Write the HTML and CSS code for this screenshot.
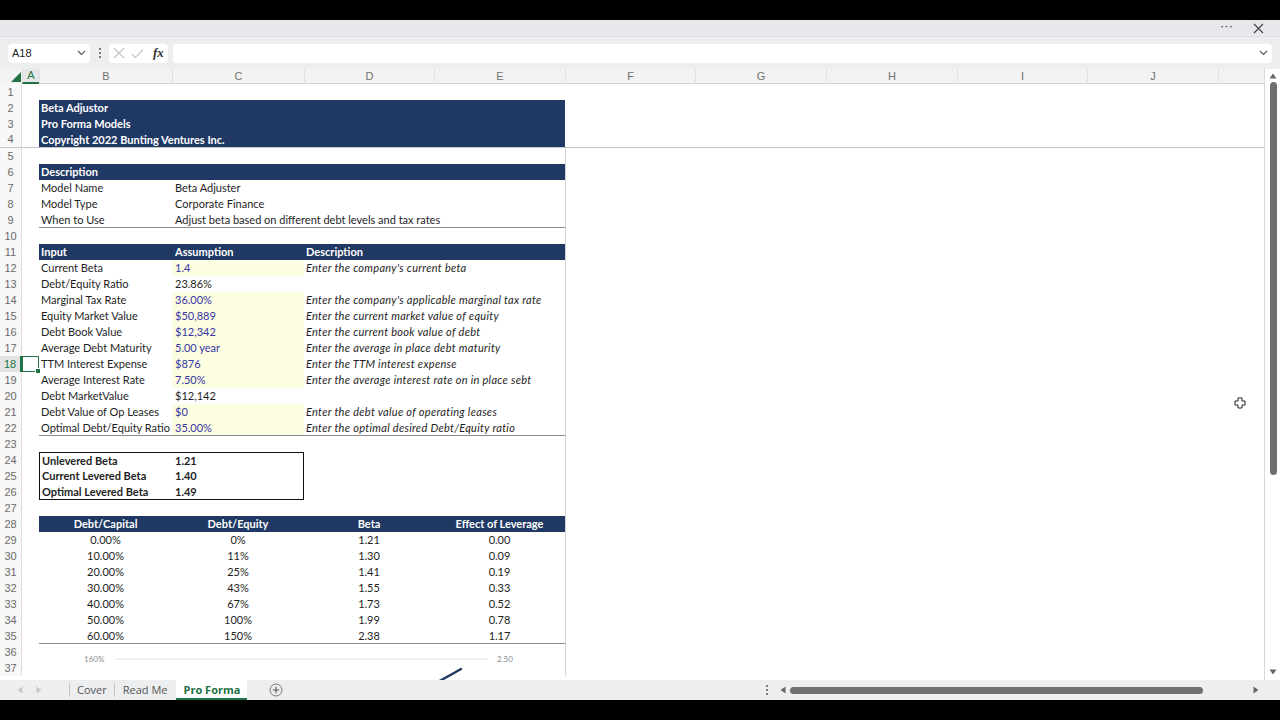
FILE: index.html
```html
<!DOCTYPE html>
<html>
<head>
<meta charset="utf-8">
<title>Beta Adjustor</title>
<link rel="stylesheet" href="styles.css">
</head>
<body>
<div class="app">
  <div class="blackbar"></div>
  <div class="titlebar">
    <span class="more">···</span>
    <svg class="close" width="11" height="11" viewBox="0 0 11 11"><path d="M1 1L10 10M10 1L1 10" stroke="#444" stroke-width="1.2" fill="none"/></svg>
  </div>
  <div class="fbar">
    <div class="namebox"><span>A18</span><svg width="9" height="6" viewBox="0 0 9 6"><path d="M1 1L4.5 4.5L8 1" stroke="#555" stroke-width="1.1" fill="none"/></svg></div>
    <div class="vdots"><i></i><i></i><i></i></div>
    <div class="fbtns">
      <svg width="12" height="12" viewBox="0 0 12 12"><path d="M1 1L11 11M11 1L1 11" stroke="#c4c4c4" stroke-width="1.1" fill="none"/></svg>
      <svg width="13" height="11" viewBox="0 0 13 11"><path d="M1 6L4.5 9.5L12 1.5" stroke="#c4c4c4" stroke-width="1.1" fill="none"/></svg>
      <span class="fx">fx</span>
    </div>
    <div class="finput"><svg width="9" height="6" viewBox="0 0 9 6"><path d="M1 1L4.5 4.5L8 1" stroke="#555" stroke-width="1.1" fill="none"/></svg></div>
  </div>
  <div class="main">
    <div class="sheet">
      <div class="colhead">
        <div class="corner"><svg width="10" height="10" viewBox="0 0 10 10"><path d="M10 0L10 10L0 10Z" fill="#217346"/></svg></div>
        <div class="ch selc">A</div>
        <div class="ch">B</div>
        <div class="ch">C</div>
        <div class="ch">D</div>
        <div class="ch">E</div>
        <div class="ch">F</div>
        <div class="ch">G</div>
        <div class="ch">H</div>
        <div class="ch">I</div>
        <div class="ch">J</div>
        <div class="ch last"></div>
      </div>
      <div class="rows">
        <div class="r"><div class="h">1</div></div>
        <div class="r"><div class="h">2</div><div class="bE nv">Beta Adjustor</div></div>
        <div class="r"><div class="h">3</div><div class="bE nv">Pro Forma Models</div></div>
        <div class="r frz"><div class="h">4</div><div class="bE nv">Copyright 2022 Bunting Ventures Inc.</div></div>
        <div class="r"><div class="h">5</div></div>
        <div class="r"><div class="h">6</div><div class="bE nv">Description</div></div>
        <div class="r"><div class="h">7</div><div class="b">Model Name</div><div class="cE">Beta Adjuster</div></div>
        <div class="r"><div class="h">8</div><div class="b">Model Type</div><div class="cE">Corporate Finance</div></div>
        <div class="r"><div class="h">9</div><div class="b ul">When to Use</div><div class="cE ul">Adjust beta based on different debt levels and tax rates</div></div>
        <div class="r"><div class="h">10</div></div>
        <div class="r"><div class="h">11</div><div class="b nv">Input</div><div class="c nv">Assumption</div><div class="dE nv">Description</div></div>
        <div class="r"><div class="h">12</div><div class="b">Current Beta</div><div class="c yl">1.4</div><div class="dE it">Enter the company's current beta</div></div>
        <div class="r"><div class="h">13</div><div class="b">Debt/Equity Ratio</div><div class="c">23.86%</div></div>
        <div class="r"><div class="h">14</div><div class="b">Marginal Tax Rate</div><div class="c yl">36.00%</div><div class="dE it">Enter the company's applicable marginal tax rate</div></div>
        <div class="r"><div class="h">15</div><div class="b">Equity Market Value</div><div class="c yl">$50,889</div><div class="dE it">Enter the current market value of equity</div></div>
        <div class="r"><div class="h">16</div><div class="b">Debt Book Value</div><div class="c yl">$12,342</div><div class="dE it">Enter the current book value of debt</div></div>
        <div class="r"><div class="h">17</div><div class="b">Average Debt Maturity</div><div class="c yl">5.00 year</div><div class="dE it">Enter the average in place debt maturity</div></div>
        <div class="r"><div class="h selh">18</div><div class="a sel"></div><div class="b">TTM Interest Expense</div><div class="c yl">$876</div><div class="dE it">Enter the TTM interest expense</div></div>
        <div class="r"><div class="h">19</div><div class="b">Average Interest Rate</div><div class="c yl">7.50%</div><div class="dE it">Enter the average interest rate on in place sebt</div></div>
        <div class="r"><div class="h">20</div><div class="b">Debt MarketValue</div><div class="c">$12,142</div></div>
        <div class="r"><div class="h">21</div><div class="b">Debt Value of Op Leases</div><div class="c yl">$0</div><div class="dE it">Enter the debt value of operating leases</div></div>
        <div class="r"><div class="h">22</div><div class="b ul">Optimal Debt/Equity Ratio</div><div class="c yl ul">35.00%</div><div class="dE it ul">Enter the optimal desired Debt/Equity ratio</div></div>
        <div class="r"><div class="h">23</div></div>
        <div class="r"><div class="h">24</div><div class="b bd bx-t bx-l">Unlevered Beta</div><div class="c bd bx-t bx-r">1.21</div></div>
        <div class="r"><div class="h">25</div><div class="b bd bx-l">Current Levered Beta</div><div class="c bd bx-r">1.40</div></div>
        <div class="r"><div class="h">26</div><div class="b bd bx-l bx-b">Optimal Levered Beta</div><div class="c bd bx-r bx-b">1.49</div></div>
        <div class="r"><div class="h">27</div></div>
        <div class="r ctr"><div class="h">28</div><div class="b nv">Debt/Capital</div><div class="c nv">Debt/Equity</div><div class="d nv">Beta</div><div class="e nv">Effect of Leverage</div></div>
        <div class="r ctr"><div class="h">29</div><div class="b">0.00%</div><div class="c">0%</div><div class="d">1.21</div><div class="e">0.00</div></div>
        <div class="r ctr"><div class="h">30</div><div class="b">10.00%</div><div class="c">11%</div><div class="d">1.30</div><div class="e">0.09</div></div>
        <div class="r ctr"><div class="h">31</div><div class="b">20.00%</div><div class="c">25%</div><div class="d">1.41</div><div class="e">0.19</div></div>
        <div class="r ctr"><div class="h">32</div><div class="b">30.00%</div><div class="c">43%</div><div class="d">1.55</div><div class="e">0.33</div></div>
        <div class="r ctr"><div class="h">33</div><div class="b">40.00%</div><div class="c">67%</div><div class="d">1.73</div><div class="e">0.52</div></div>
        <div class="r ctr"><div class="h">34</div><div class="b">50.00%</div><div class="c">100%</div><div class="d">1.99</div><div class="e">0.78</div></div>
        <div class="r ctr"><div class="h">35</div><div class="b ul">60.00%</div><div class="c ul">150%</div><div class="d ul">2.38</div><div class="e ul">1.17</div></div>
        <div class="r"><div class="h">36</div></div>
        <div class="r"><div class="h">37</div></div>
      </div>
      <svg class="chart" width="525" height="40" viewBox="0 0 525 40">
        <text x="44" y="16" class="ax">160%</text>
        <line x1="75" y1="13" x2="448" y2="13" stroke="#e2e2e2" stroke-width="1"/>
        <text x="457" y="16" class="ax">2.50</text>
        <path d="M396 37L414 27L421 23" stroke="#1f3864" stroke-width="2.4" fill="none" stroke-linecap="round"/>
      </svg>
      <svg class="cursor" width="12" height="12" viewBox="0 0 12 12"><path d="M4 1H8V4H11V8H8V11H4V8H1V4H4Z" fill="#fff" stroke="#222" stroke-width="1"/></svg>
    </div>
    <div class="vscroll">
      <svg class="up" width="8" height="6" viewBox="0 0 8 6"><path d="M4 0.5L7.5 5.5H0.5Z" fill="#666"/></svg>
      <div class="vthumb"></div>
      <div class="vspace"></div>
      <svg class="down" width="8" height="6" viewBox="0 0 8 6"><path d="M0.5 0.5H7.5L4 5.5Z" fill="#666"/></svg>
    </div>
  </div>
  <div class="tabbar">
    <div class="tabnav">
      <svg width="6" height="8" viewBox="0 0 6 8"><path d="M5.5 0.5V7.5L0.5 4Z" fill="#c8c8c8"/></svg>
      <svg width="6" height="8" viewBox="0 0 6 8"><path d="M0.5 0.5V7.5L5.5 4Z" fill="#c8c8c8"/></svg>
    </div>
    <div class="sep"></div>
    <div class="tab t1">Cover</div>
    <div class="sep"></div>
    <div class="tab t2">Read Me</div>
    <div class="tab active">Pro Forma</div>
    <div class="addtab"><svg width="14" height="14" viewBox="0 0 14 14"><circle cx="7" cy="7" r="6" stroke="#777" stroke-width="1" fill="none"/><path d="M7 3.8V10.2M3.8 7H10.2" stroke="#555" stroke-width="1.1"/></svg></div>
    <div class="hscroll">
      <div class="vdots small"><i></i><i></i><i></i></div>
      <svg class="larr" width="6" height="8" viewBox="0 0 6 8"><path d="M5.5 0.5V7.5L0.5 4Z" fill="#666"/></svg>
      <div class="hthumb"></div>
      <svg class="rarr" width="6" height="8" viewBox="0 0 6 8"><path d="M0.5 0.5V7.5L5.5 4Z" fill="#666"/></svg>
    </div>
  </div>
</div>
</body>
</html>
```

FILE: styles.css
```css
* { box-sizing: border-box; }
html, body { margin: 0; padding: 0; background: #000; }
body { width: 1280px; height: 720px; overflow: hidden; font-family: "Liberation Sans", Arial, sans-serif; }

.app { width: 1280px; height: 720px; display: flex; flex-direction: column; background: #000; }

.blackbar { height: 20px; background: #000; flex: none; }

.titlebar {
  height: 17px; flex: none; background: #e6e8eb;
  display: flex; align-items: center; justify-content: flex-end;
  padding-right: 16px; gap: 20px;
  border-bottom: 1px solid #dcdee1;
}
.titlebar .more { font-size: 13px; color: #333; line-height: 10px; position: relative; top: -2px; }

.fbar {
  height: 32px; flex: none; background: #eceef0;
  display: flex; align-items: center; padding: 0 8px;
}
.namebox {
  width: 82px; height: 19px; background: #fff; border-radius: 4px;
  display: flex; align-items: center; justify-content: space-between;
  padding: 0 4px; font-size: 11px; color: #222;
}
.vdots { width: 19px; display: flex; flex-direction: column; align-items: center; gap: 2px; }
.vdots i { display: block; width: 2px; height: 2px; background: #555; border-radius: 1px; }
.fbtns {
  width: 59px; height: 19px; background: #fff; border-radius: 4px;
  display: flex; align-items: center; gap: 6px; padding-left: 4px;
}
.fx { font-family: "Liberation Serif", serif; font-style: italic; font-size: 13px; color: #333; font-weight: 700; margin-left: 3px; }
.finput {
  flex: 1; margin-left: 5px; height: 19px; background: #fff; border-radius: 4px;
  display: flex; align-items: center; justify-content: flex-end; padding-right: 4px;
}

.main { height: 611px; flex: none; display: flex; background: #fff; }
.sheet { width: 1265px; position: relative; overflow: hidden; border-right: 1px solid #d8d8d8; }

.colhead {
  height: 15px; display: grid;
  grid-template-columns: 22px 17px 133px 132px 130px 131px 130px 131px 131px 130px 131px 1fr;
  background: #f3f3f3; border-bottom: 1px solid #d4d4d4;
}
.corner { display: flex; align-items: flex-end; justify-content: flex-end; padding: 0 1px 2px 0; background: #f3f3f3; }
.ch {
  font-size: 11px; color: #707070; text-align: center; line-height: 14px;
  border-left: 1px solid #e0e0e0;
}
.ch.selc { color: #217346; border-bottom: 2px solid #217346; background: #e6e6e6; line-height: 13px; }

.rows {
  background: linear-gradient(#d6d6d6, #d6d6d6) 565px 64px / 1px 100% no-repeat;
  font-family: Lato, "Liberation Sans", sans-serif; font-size: 11px; color: #1e1e1e;
}
.r {
  height: 16px; display: grid;
  grid-template-columns: 22px 17px 133px 132px 130px 131px 1fr;
  line-height: 16px; white-space: nowrap;
}
.r.frz { border-bottom: 1px solid #c6c6c6; line-height: 15px; }
.r > div { grid-row: 1; }
.h {
  grid-column: 1; background: #f8f8f8; border-right: 1px solid #dedede;
  font-family: "Liberation Sans", Arial, sans-serif; font-size: 11px; color: #6a6a6a;
  text-align: center;
}
.h.selh { color: #217346; background: #e4e4e4; border-right: 2px solid #217346; }
.a { grid-column: 2; }
.b { grid-column: 3; padding-left: 2px; }
.c { grid-column: 4; padding-left: 3px; }
.d { grid-column: 5; padding-left: 2px; }
.e { grid-column: 6; padding-left: 2px; }
.bE { grid-column: 3 / 7; padding-left: 2px; }
.cE { grid-column: 4 / 7; padding-left: 3px; }
.dE { grid-column: 5 / 7; padding-left: 2px; }

.nv { background: #1f3864; color: #fff; font-weight: 700; }
.yl { background: #fdfde1; color: #3636a6; }
.it { font-style: italic; letter-spacing: 0.3px; }
.bd { font-weight: 700; }
.ul { border-bottom: 1px solid #8c8c8c; line-height: 15px; }

.ctr .b, .ctr .c, .ctr .d, .ctr .e { text-align: center; padding-left: 0; }

.bx-t { border-top: 1px solid #111; }
.bx-b { border-bottom: 1px solid #111; }
.bx-l { border-left: 1px solid #111; }
.bx-r { border-right: 1px solid #111; }
.bx-t, .bx-b { line-height: 15px; }

.sel { position: relative; box-shadow: inset 0 0 0 1px #217346; }
.sel::after {
  content: ""; position: absolute; right: -2px; bottom: -2px;
  width: 4px; height: 4px; background: #217346; border: 1px solid #fff;
}

.chart { position: absolute; left: 40px; top: 577px; }
.chart .ax { font-family: Lato, "Liberation Sans", sans-serif; font-size: 8px; fill: #8a8a8a; }
.cursor { position: absolute; left: 1234px; top: 328px; }

.vscroll { width: 15px; display: flex; flex-direction: column; align-items: center; padding-top: 4px; background: #fff; }
.vthumb { width: 7px; height: 393px; background: #6f6f6f; border-radius: 4px; margin-top: 3px; margin-left: 1px; }
.vspace { flex: 1; }
.vscroll .down { margin-bottom: 5px; }

.tabbar {
  height: 20px; flex: none; background: #eceef0;
  display: flex; align-items: center; font-family: "Open Sans", sans-serif; font-size: 11px; color: #555;
  white-space: nowrap;
}
.tabnav { width: 69px; flex: none; display: flex; gap: 13px; padding-left: 17px; align-items: center; }
.sep { width: 1px; height: 14px; background: #c2c2c2; flex: none; }
.tab { height: 20px; line-height: 19px; flex: none; }
.tab.t1 { padding: 0 7px; }
.tab.t2 { padding: 0 9px 0 8px; }
.tab.active {
  background: #fff; color: #1e7145; font-weight: 700;
  width: 71px; text-align: center; padding: 0; border-bottom: 2px solid #1e7145;
}
.addtab { width: 58px; flex: none; display: flex; justify-content: center; align-items: center; }
.hscroll { width: 520px; flex: none; margin-left: auto; display: flex; align-items: center; }
.vdots.small { width: 13px; }
.hscroll .larr { margin-left: 7px; }
.hthumb { width: 413px; height: 7px; background: #6f6f6f; border-radius: 4px; margin-left: 4px; }
.hscroll .rarr { margin-left: 50px; }
```
